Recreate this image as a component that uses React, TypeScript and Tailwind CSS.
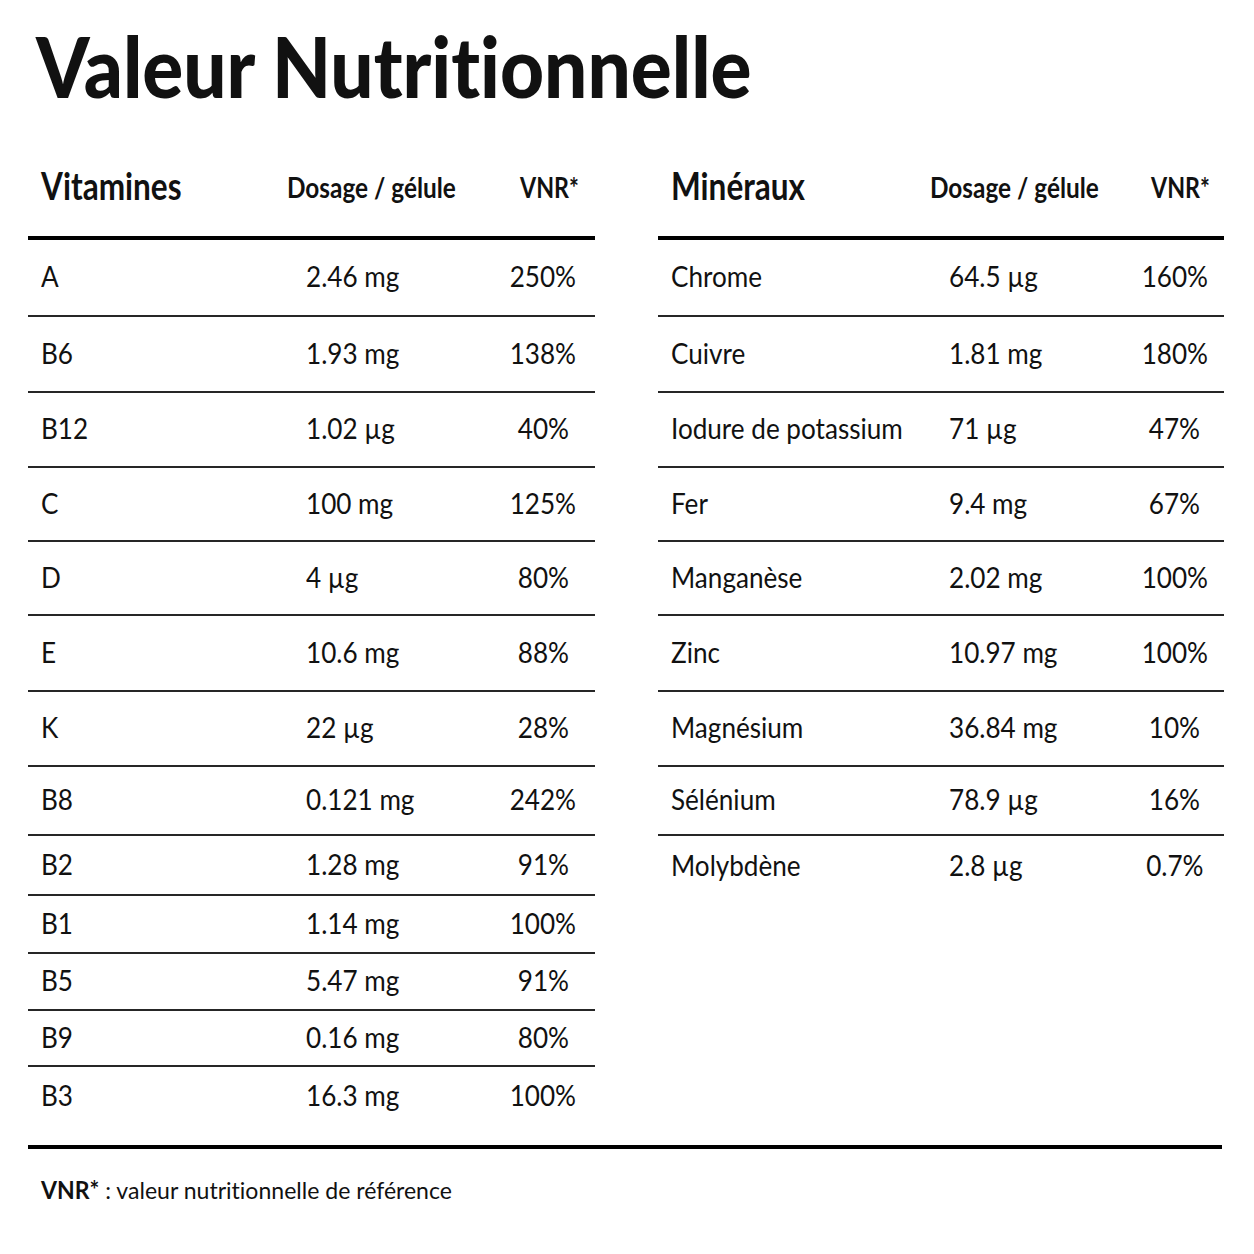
const vitamins = [
  ["A", "2.46 mg", "250%"],
  ["B6", "1.93 mg", "138%"],
  ["B12", "1.02 µg", "40%"],
  ["C", "100 mg", "125%"],
  ["D", "4 µg", "80%"],
  ["E", "10.6 mg", "88%"],
  ["K", "22 µg", "28%"],
  ["B8", "0.121 mg", "242%"],
  ["B2", "1.28 mg", "91%"],
  ["B1", "1.14 mg", "100%"],
  ["B5", "5.47 mg", "91%"],
  ["B9", "0.16 mg", "80%"],
  ["B3", "16.3 mg", "100%"],
];

const minerals = [
  ["Chrome", "64.5 µg", "160%"],
  ["Cuivre", "1.81 mg", "180%"],
  ["Iodure de potassium", "71 µg", "47%"],
  ["Fer", "9.4 mg", "67%"],
  ["Manganèse", "2.02 mg", "100%"],
  ["Zinc", "10.97 mg", "100%"],
  ["Magnésium", "36.84 mg", "10%"],
  ["Sélénium", "78.9 µg", "16%"],
  ["Molybdène", "2.8 µg", "0.7%"],
];

// row heights measured from the sheet (border included)
const rowHeights = ["h-[77px]", "h-[76px]", "h-[75px]", "h-[74px]", "h-[74px]", "h-[76px]", "h-[75px]", "h-[69px]", "h-[60px]", "h-[58px]", "h-[57px]", "h-[56px]", "h-[58px]"];

function Table({ title, rows, cols }: { title: string; rows: string[][]; cols: string }) {
  return (
    <div className="flex flex-col">
      <div className={`grid ${cols} items-end h-[132px] pb-[32px] border-b-4 border-black`}>
        <span className="pl-[13px] text-[38px] leading-none font-bold">
          <span className="inline-block origin-left scale-x-[0.83]">{title}</span>
        </span>
        <span className="-ml-[19px] mb-[3px] text-[28px] leading-none font-bold">
          <span className="inline-block origin-left scale-x-[0.87]">Dosage / gélule</span>
        </span>
        <span className="mb-[3px] text-center text-[28px] leading-none font-bold">
          <span className="inline-block origin-center scale-x-[0.83] translate-x-[6px]">VNR*</span>
        </span>
      </div>
      {rows.map((r, i) => (
        <div
          key={r[0]}
          className={`grid ${cols} items-center pb-[4px] ${rowHeights[i]} ${i < rows.length - 1 ? "border-b-2 border-[#262626]" : ""} text-[29px] leading-none`}
        >
          <span className="pl-[13px] whitespace-nowrap">
            <span className="inline-block origin-left scale-x-[0.9]">{r[0]}</span>
          </span>
          <span className="whitespace-nowrap">
            <span className="inline-block origin-left scale-x-[0.9]">{r[1]}</span>
          </span>
          <span className="text-center whitespace-nowrap">
            <span className="inline-block origin-center scale-x-[0.9]">{r[2]}</span>
          </span>
        </div>
      ))}
    </div>
  );
}

export default function App() {
  return (
    <div className="w-[1254px] h-[1254px] bg-white text-[#111] font-['Lato',sans-serif] [font-variant-ligatures:none] overflow-hidden">
      <h1 className="ml-[36px] mt-[24px] h-[84px] text-[84px] leading-none font-black whitespace-nowrap">
        <span className="inline-block origin-left scale-x-[0.91]">Valeur Nutritionnelle</span>
      </h1>
      <div className="flex items-start pl-[28px] gap-[63px]">
        <div className="w-[567px]">
          <Table title="Vitamines" rows={vitamins} cols="grid-cols-[278px_185px_104px]" />
        </div>
        <div className="w-[566px]">
          <Table title="Minéraux" rows={minerals} cols="grid-cols-[291px_176px_99px]" />
        </div>
      </div>
      <div className="ml-[28px] mt-[20px] w-[1194px] h-[4px] bg-black" />
      <p className="ml-[41px] mt-[29px] text-[24px] leading-none whitespace-nowrap">
        <span className="inline-block origin-left scale-x-[0.96]">
          <span className="font-bold">VNR*</span> : valeur nutritionnelle de référence
        </span>
      </p>
    </div>
  );
}
